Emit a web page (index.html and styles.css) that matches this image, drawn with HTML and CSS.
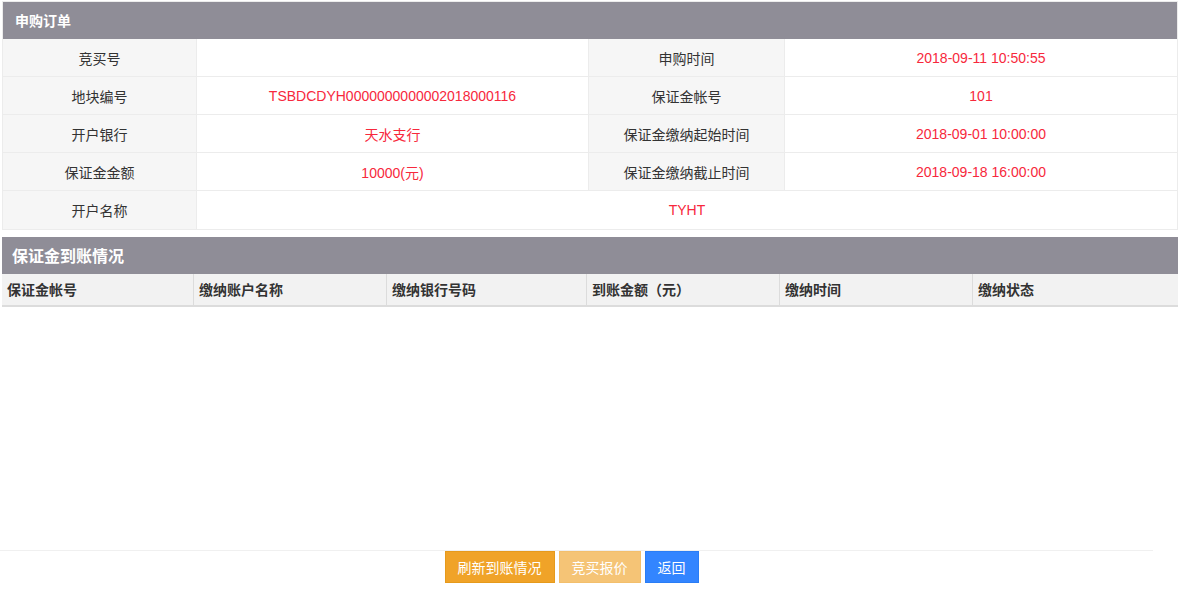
FILE: index.html
```html
<!DOCTYPE html>
<html lang="zh-CN">
<head>
<meta charset="utf-8">
<title>申购订单</title>
<link rel="stylesheet" href="styles.css">
</head>
<body>
<div class="page">
  <section class="panel">
    <div class="panel-head">申购订单</div>
    <div class="info-grid">
      <div class="lbl">竞买号</div><div class="val"></div>
      <div class="lbl">申购时间</div><div class="val red">2018-09-11 10:50:55</div>

      <div class="lbl">地块编号</div><div class="val red">TSBDCDYH0000000000002018000116</div>
      <div class="lbl">保证金帐号</div><div class="val red">101</div>

      <div class="lbl">开户银行</div><div class="val red">天水支行</div>
      <div class="lbl">保证金缴纳起始时间</div><div class="val red">2018-09-01 10:00:00</div>

      <div class="lbl">保证金金额</div><div class="val red">10000(元)</div>
      <div class="lbl">保证金缴纳截止时间</div><div class="val red">2018-09-18 16:00:00</div>

      <div class="lbl last">开户名称</div><div class="val red wide last">TYHT</div>
    </div>
  </section>

  <section class="deposit">
    <div class="deposit-head">保证金到账情况</div>
    <div class="deposit-cols">
      <div class="col c1">保证金帐号</div>
      <div class="col c2">缴纳账户名称</div>
      <div class="col c3">缴纳银行号码</div>
      <div class="col c4">到账金额（元）</div>
      <div class="col c5">缴纳时间</div>
      <div class="col c6">缴纳状态</div>
    </div>
    <div class="deposit-body"></div>
  </section>

  <footer class="actions">
    <button class="btn btn-orange">刷新到账情况</button>
    <button class="btn btn-light">竞买报价</button>
    <button class="btn btn-blue">返回</button>
  </footer>
</div>
</body>
</html>
```

FILE: styles.css
```css
html, body {
  margin: 0;
  padding: 0;
  background: #ffffff;
}

body {
  font-family: "Liberation Sans", "Noto Sans CJK SC", sans-serif;
  font-size: 14px;
  color: #333333;
}

.page {
  width: 1190px;
}

.panel {
  margin: 1px 0 0 2px;
  width: 1176px;
  box-sizing: border-box;
  border: 1px solid #ececec;
}

.panel-head {
  height: 37px;
  line-height: 37px;
  background: #8f8d97;
  color: #ffffff;
  font-weight: bold;
  font-size: 14px;
  padding-left: 12px;
  font-family: "Noto Sans CJK SC", sans-serif;
}

.info-grid {
  display: grid;
  grid-template-columns: 194px 392px 196px 392px;
}

.lbl, .val {
  height: 38px;
  box-sizing: border-box;
  border-bottom: 1px solid #ececec;
  display: flex;
  align-items: center;
  justify-content: center;
  font-family: "Liberation Sans", "Noto Sans CJK SC", sans-serif;
}

.lbl {
  background: #f6f6f6;
  color: #333333;
  border-right: 1px solid #ececec;
}

.val {
  background: #ffffff;
}

.info-grid > .val:nth-child(2),
.info-grid > .val:nth-child(6),
.info-grid > .val:nth-child(10),
.info-grid > .val:nth-child(14) {
  border-right: 1px solid #ececec;
}

.red {
  color: #f7283c;
}

.wide {
  grid-column: span 3;
}

.last {
  border-bottom: none;
}

.deposit {
  margin: 7px 0 0 2px;
  width: 1176px;
}

.deposit-head {
  height: 37px;
  line-height: 37px;
  background: #8f8d97;
  color: #ffffff;
  font-weight: bold;
  font-size: 16px;
  padding-left: 10px;
  font-family: "Noto Sans CJK SC", serif;
}

.deposit-cols {
  display: grid;
  grid-template-columns: 192px 193px 200px 193px 193px 205px;
  background: #f2f2f2;
  border-bottom: 2px solid #dcdcdc;
}

.col {
  height: 31px;
  line-height: 31px;
  padding-left: 5px;
  font-weight: bold;
  color: #333333;
  font-family: "Noto Sans CJK SC", sans-serif;
  border-right: 1px solid #dcdcdc;
  box-sizing: border-box;
}

.c6 {
  border-right: none;
}

.deposit-body {
  height: 243px;
}

.actions {
  width: 1153px;
  box-sizing: border-box;
  border-top: 1px solid #f0f0f0;
  display: flex;
  justify-content: center;
  gap: 4px;
  padding-right: 10px;
}

.btn {
  height: 32px;
  padding: 0 12px;
  border: 1px solid transparent;
  color: #ffffff;
  font-size: 14px;
  font-family: "Noto Sans CJK SC", sans-serif;
  cursor: pointer;
  margin: 0;
}

.btn-orange {
  background: #f0a328;
  border-color: #e69a1c;
}

.btn-light {
  background: #f5c476;
  border-color: #f3bf6c;
}

.btn-blue {
  background: #3385ff;
  border-color: #2a7df5;
}
```
